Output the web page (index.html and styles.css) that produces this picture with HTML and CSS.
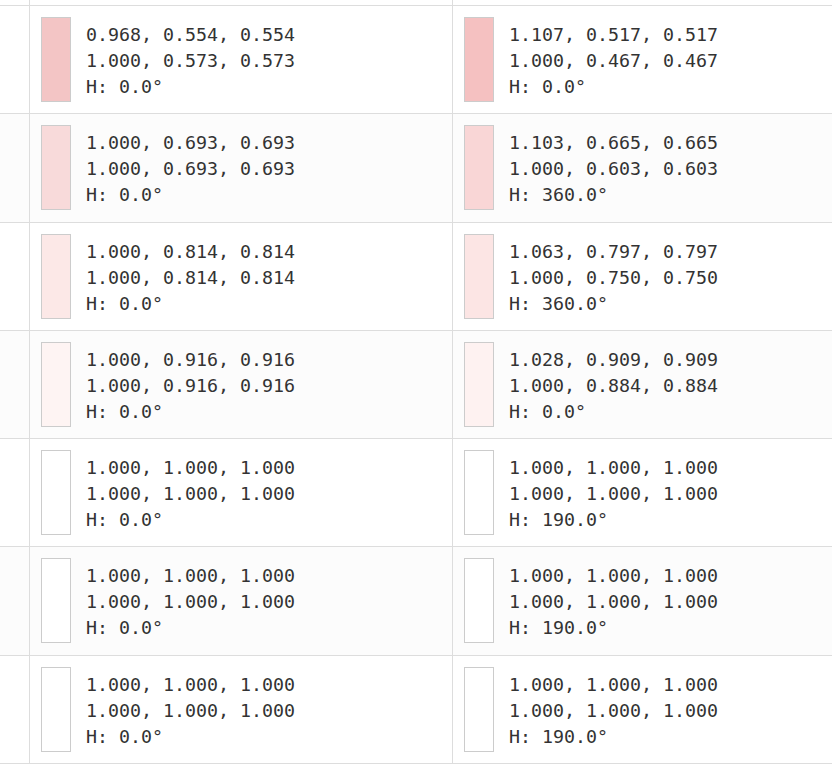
FILE: index.html
```html
<!DOCTYPE html>
<html>
<head>
<meta charset="utf-8">
<link rel="stylesheet" href="styles.css">
</head>
<body>
<div class="table">
  <div class="row top"><div class="cell lead"></div><div class="cell"></div><div class="cell"></div></div>

  <div class="row">
    <div class="cell lead"></div>
    <div class="cell"><div class="item"><div class="swatch" style="background:#f3c5c5"></div><div class="vals"><div>0.968, 0.554, 0.554</div><div>1.000, 0.573, 0.573</div><div>H: 0.0°</div></div></div></div>
    <div class="cell"><div class="item"><div class="swatch" style="background:#f5c1c1"></div><div class="vals"><div>1.107, 0.517, 0.517</div><div>1.000, 0.467, 0.467</div><div>H: 0.0°</div></div></div></div>
  </div>

  <div class="row alt">
    <div class="cell lead"></div>
    <div class="cell"><div class="item"><div class="swatch" style="background:#f8dada"></div><div class="vals"><div>1.000, 0.693, 0.693</div><div>1.000, 0.693, 0.693</div><div>H: 0.0°</div></div></div></div>
    <div class="cell"><div class="item"><div class="swatch" style="background:#f9d6d6"></div><div class="vals"><div>1.103, 0.665, 0.665</div><div>1.000, 0.603, 0.603</div><div>H: 360.0°</div></div></div></div>
  </div>

  <div class="row">
    <div class="cell lead"></div>
    <div class="cell"><div class="item"><div class="swatch" style="background:#fce8e7"></div><div class="vals"><div>1.000, 0.814, 0.814</div><div>1.000, 0.814, 0.814</div><div>H: 0.0°</div></div></div></div>
    <div class="cell"><div class="item"><div class="swatch" style="background:#fce5e4"></div><div class="vals"><div>1.063, 0.797, 0.797</div><div>1.000, 0.750, 0.750</div><div>H: 360.0°</div></div></div></div>
  </div>

  <div class="row alt">
    <div class="cell lead"></div>
    <div class="cell"><div class="item"><div class="swatch" style="background:#fef4f3"></div><div class="vals"><div>1.000, 0.916, 0.916</div><div>1.000, 0.916, 0.916</div><div>H: 0.0°</div></div></div></div>
    <div class="cell"><div class="item"><div class="swatch" style="background:#fef2f1"></div><div class="vals"><div>1.028, 0.909, 0.909</div><div>1.000, 0.884, 0.884</div><div>H: 0.0°</div></div></div></div>
  </div>

  <div class="row">
    <div class="cell lead"></div>
    <div class="cell"><div class="item"><div class="swatch" style="background:#ffffff"></div><div class="vals"><div>1.000, 1.000, 1.000</div><div>1.000, 1.000, 1.000</div><div>H: 0.0°</div></div></div></div>
    <div class="cell"><div class="item"><div class="swatch" style="background:#ffffff"></div><div class="vals"><div>1.000, 1.000, 1.000</div><div>1.000, 1.000, 1.000</div><div>H: 190.0°</div></div></div></div>
  </div>

  <div class="row alt">
    <div class="cell lead"></div>
    <div class="cell"><div class="item"><div class="swatch" style="background:#ffffff"></div><div class="vals"><div>1.000, 1.000, 1.000</div><div>1.000, 1.000, 1.000</div><div>H: 0.0°</div></div></div></div>
    <div class="cell"><div class="item"><div class="swatch" style="background:#ffffff"></div><div class="vals"><div>1.000, 1.000, 1.000</div><div>1.000, 1.000, 1.000</div><div>H: 190.0°</div></div></div></div>
  </div>

  <div class="row">
    <div class="cell lead"></div>
    <div class="cell"><div class="item"><div class="swatch" style="background:#ffffff"></div><div class="vals"><div>1.000, 1.000, 1.000</div><div>1.000, 1.000, 1.000</div><div>H: 0.0°</div></div></div></div>
    <div class="cell"><div class="item"><div class="swatch" style="background:#ffffff"></div><div class="vals"><div>1.000, 1.000, 1.000</div><div>1.000, 1.000, 1.000</div><div>H: 190.0°</div></div></div></div>
  </div>
</div>
</body>
</html>
```
FILE: styles.css
```css
html, body {
  margin: 0;
  padding: 0;
  background: #fff;
  overflow: hidden;
}
.table {
  width: 100%;
  font-family: "DejaVu Sans Mono", monospace;
  font-size: 18.3px;
  line-height: 26px;
  color: #333;
}
.row {
  display: grid;
  grid-template-columns: 30px 423px 1fr;
  border-bottom: 1px solid #ddd;
}
.row.top {
  height: 5px;
}
.row.alt {
  background: #fcfcfc;
}
.cell {
  border-right: 1px solid #ddd;
  padding: 11px 11px 11.3px 11px;
}
.cell:last-child {
  border-right: none;
}
.row.top .cell,
.cell.lead {
  padding: 0;
}
.item {
  display: flex;
  align-items: flex-start;
}
.swatch {
  box-sizing: border-box;
  width: 30px;
  height: 85px;
  border: 1px solid #ccc;
  flex: none;
}
.vals {
  margin-left: 15px;
  padding-top: 5px;
  white-space: pre;
}
```
